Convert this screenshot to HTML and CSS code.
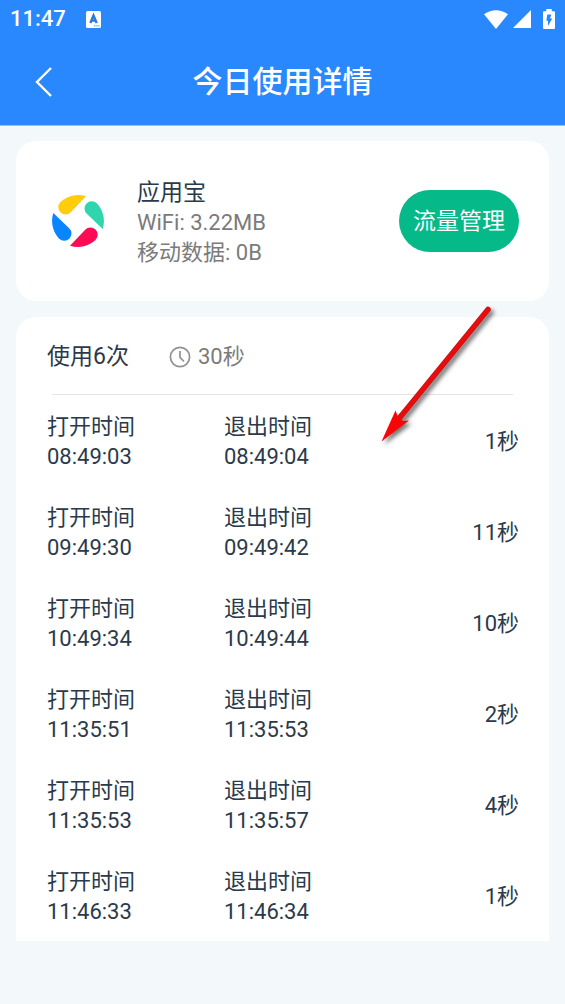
FILE: index.html
```html
<!DOCTYPE html>
<html lang="zh-CN">
<head>
<meta charset="utf-8">
<meta name="viewport" content="width=device-width, initial-scale=1">
<title>今日使用详情</title>
<link rel="stylesheet" href="styles.css">
</head>
<body>
<header class="header">
  <div class="status">
    <span class="clock">11:47</span>
    <svg class="notice" width="15" height="17" viewBox="0 0 15 17" aria-hidden="true">
      <rect width="15" height="17" rx="1.5" fill="#fff"/>
      <path d="M4.3 12 7.5 4.5 10.7 12M5.5 9.6h4" fill="none" stroke="#2a78d8" stroke-width="2.3"/>
      <path d="M8 14.7h6" stroke="#8bbcfb" stroke-width="1.6" stroke-dasharray="1.5 .6"/>
    </svg>
    <span class="indicators">
      <svg width="24" height="19" viewBox="0 0 24 19" aria-hidden="true"><path d="M0 4.2Q12-3.8 24 4.2L12 19Z" fill="#fff"/></svg>
      <svg width="18" height="18" viewBox="0 0 18 18" aria-hidden="true"><path d="M18 0v18H0Z" fill="#fff"/></svg>
      <svg class="battery" width="12" height="20" viewBox="0 0 12 20" aria-hidden="true"><path d="M3.3 0h5.4v2.3H11q1 0 1 1V19q0 1-1 1H1q-1 0-1-1V3.3q0-1 1-1h2.3Z" fill="#fff"/><path d="M4.3 5.5h4L7 9.5h2.3L5 17v-5.2H3.3Z" fill="#2a88fe"/></svg>
    </span>
  </div>
  <nav class="titlebar">
    <button class="back" type="button" aria-label="返回">
      <svg width="18" height="30" viewBox="0 0 18 30" aria-hidden="true"><path d="M16 1 2 15l14 14" fill="none" stroke="#fff" stroke-width="2.4"/></svg>
    </button>
    <h1 class="title">今日使用详情</h1>
  </nav>
</header>
<main class="content">
  <section class="card app">
    <svg class="logo" width="52" height="52" viewBox="0 0 52 52" aria-hidden="true">
      <path d="M34 1.3A26 26 0 0 0 8.3 7.2A7.2 7.2 0 0 0 18.8 17.2Z" fill="#ffcd0a"/>
      <path d="M34 1.3A26 26 0 0 0 8.3 7.2A7.2 7.2 0 0 0 18.8 17.2Z" fill="#2fd5ad" transform="rotate(90 26 26)"/>
      <path d="M34 1.3A26 26 0 0 0 8.3 7.2A7.2 7.2 0 0 0 18.8 17.2Z" fill="#ff0a55" transform="rotate(180 26 26)"/>
      <path d="M34 1.3A26 26 0 0 0 8.3 7.2A7.2 7.2 0 0 0 18.8 17.2Z" fill="#0a84ff" transform="rotate(270 26 26)"/>
    </svg>
    <div class="info">
      <h2 class="name">应用宝</h2>
      <p class="traffic">WiFi: 3.22MB</p>
      <p class="traffic">移动数据: 0B</p>
    </div>
    <button class="manage" type="button">流量管理</button>
  </section>
  <section class="card usage">
    <div class="summary">
      <h2 class="count">使用6次</h2>
      <span class="total">
        <svg width="22" height="22" viewBox="0 0 22 22" fill="none" stroke="#929292" stroke-width="1.7" aria-hidden="true"><circle cx="11" cy="11" r="9.6"/><path d="M11 5v6.3l4 4.2"/></svg>
        30秒
      </span>
    </div>
    <ul class="records">
      <li class="record"><p>打开时间<br>08:49:03</p><p>退出时间<br>08:49:04</p><span class="length">1秒</span></li>
      <li class="record"><p>打开时间<br>09:49:30</p><p>退出时间<br>09:49:42</p><span class="length">11秒</span></li>
      <li class="record"><p>打开时间<br>10:49:34</p><p>退出时间<br>10:49:44</p><span class="length">10秒</span></li>
      <li class="record"><p>打开时间<br>11:35:51</p><p>退出时间<br>11:35:53</p><span class="length">2秒</span></li>
      <li class="record"><p>打开时间<br>11:35:53</p><p>退出时间<br>11:35:57</p><span class="length">4秒</span></li>
      <li class="record"><p>打开时间<br>11:46:33</p><p>退出时间<br>11:46:34</p><span class="length">1秒</span></li>
    </ul>
    <svg class="arrow" width="120" height="150" viewBox="0 0 120 150" aria-hidden="true">
      <path d="M108 9.500 17 121" stroke="#c2141a" stroke-width="5.500" stroke-linecap="round"/>
      <path d="M108 9.500 17 121" stroke="#ec0b0b" stroke-width="4" stroke-linecap="round"/>
      <path d="M1.500 141.500 15.500 110.500 18 117l5 4 6-.5Z" fill="#f80505"/>
    </svg>
  </section>
</main>
</body>
</html>
```
FILE: styles.css
```css
* {
  box-sizing: border-box;
}

body {
  margin: 0;
  min-height: 100vh;
  background: #f3f8fb;
  color: #2b3a4a;
  font: 22px/30px Roboto, "Noto Sans CJK SC", sans-serif;
}

h1, h2, p, ul {
  margin: 0;
  padding: 0;
  font-weight: 400;
}

button {
  border: 0;
  font-family: inherit;
  color: #fff;
  cursor: pointer;
}

svg {
  display: block;
  flex: none;
}

.header {
  background: #2a88fe;
  color: #fff;
  border-bottom: 1px solid #8fc1ff;
}

.status {
  display: flex;
  align-items: center;
  height: 38px;
  padding: 0 10px;
}

.clock {
  font-weight: 500;
}

.notice {
  margin-left: 20px;
}

.indicators {
  display: flex;
  align-items: center;
  gap: 5px;
  margin-left: auto;
}

.battery {
  margin-left: 7px;
}

.titlebar {
  display: grid;
  grid-template-columns: 53px 1fr 53px;
  align-items: center;
  height: 87px;
}

.back {
  display: flex;
  justify-content: flex-end;
  padding: 0;
  background: none;
}

.title {
  font-size: 30px;
  line-height: 40px;
  font-weight: 500;
  text-align: center;
}

.content {
  display: grid;
  gap: 16px;
  padding: 15px 16px 63px;
}

.card {
  background: #fff;
  border-radius: 20px;
}

.app {
  display: flex;
  align-items: center;
  padding: 33px 30px 33px 36px;
}

.info {
  flex: 1;
  margin-left: 33px;
  padding-top: 4px;
}

.name {
  font-size: 23px;
}

.traffic {
  color: #7b7b7b;
}

.manage {
  padding: 17px 14px 15px;
  border-radius: 31px;
  background: #06b988;
  font-size: 23px;
  line-height: 30px;
}

.usage {
  position: relative;
  border-radius: 20px 20px 0 0;
}

.summary {
  display: flex;
  align-items: center;
  gap: 40px;
  height: 78px;
  padding-top: 2px;
  margin: 0 36px;
  border-bottom: 1px solid #e4e4e4;
}

.count {
  margin-left: -5px;
  font-size: 23px;
}

.total {
  display: flex;
  align-items: center;
  gap: 7px;
  color: #7b7b7b;
}

.records {
  list-style: none;
}

.record {
  display: grid;
  grid-template-columns: 3fr 3fr 2fr;
  align-items: center;
  padding: 17px 30px 14px 31px;
}

.length {
  text-align: right;
}

.arrow {
  position: absolute;
  top: -17px;
  right: 49px;
  filter: drop-shadow(3px 3px 2px #0008);
}
```
